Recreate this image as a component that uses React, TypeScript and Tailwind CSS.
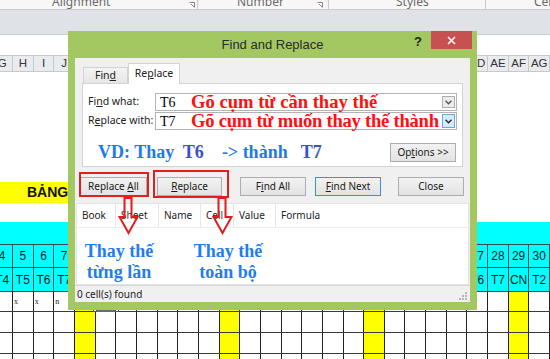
import React from "react";

const COLS = Array.from({ length: 27 }, (_, i) => i);
const LETTERS = ["G","H","I","J","K","L","M","N","O","P","Q","R","S","T","U","V","W","X","Y","Z","AA","AB","AC","AD","AE","AF","AG"];
const dayName = (n: number) => {
  const m = n % 7;
  if (m === 1) return "CN";
  if (m === 0) return "T7";
  return "T" + m;
};

const UI = "font-['Noto_Sans',Arial,sans-serif]";
const SERIF = "font-['Liberation_Serif','Times_New_Roman',serif]";

function HeaderRow() {
  return (
    <div className="h-[17px] bg-[#e9ebee] border-y border-[#c5c8cc] overflow-hidden">
      <div className="flex ml-[-7.67px] h-full">
        {COLS.map((i) => (
          <div key={i} className="w-[20.67px] shrink-0 h-full border-r border-[#c5c8cc] flex items-center justify-center text-[11.5px] text-[#333] font-['Liberation_Sans',Arial,sans-serif]">
            {LETTERS[i]}
          </div>
        ))}
      </div>
    </div>
  );
}

function CyanRow({ kind, h }: { kind: "num" | "day"; h: string }) {
  return (
    <div className={`${h} bg-[#00ffff] border-b border-[#2d4f4f] overflow-hidden`}>
      <div className="flex ml-[-7.67px] h-full">
        {COLS.map((i) => {
          const n = i + 4;
          return (
            <div key={i} className="w-[20.67px] shrink-0 h-full border-r border-[#2d4f4f] flex items-center justify-center text-[12px] text-[#1a1a1a] font-['Liberation_Sans',Arial,sans-serif]">
              {kind === "num" ? n : dayName(n)}
            </div>
          );
        })}
      </div>
    </div>
  );
}

function GridRow({ h, marks }: { h: string; marks?: boolean }) {
  return (
    <div className={`${h} border-b border-[#3a3a3a] overflow-hidden`}>
      <div className="flex ml-[-7.67px] h-full">
        {COLS.map((i) => {
          const n = i + 4;
          const cn = n % 7 === 1;
          let mark = "";
          if (marks && (i === 1 || i === 2)) mark = "x";
          if (marks && i === 3) mark = "n";
          return (
            <div key={i} className={`w-[20.67px] shrink-0 h-full border-r border-[#222] ${cn ? "bg-[#ffff00]" : "bg-white"}`}>
              {mark && (
                <span className={`${SERIF} block text-[8px] leading-[10px] pl-[1px] pt-[5px] text-[#222]`}>{mark}</span>
              )}
            </div>
          );
        })}
      </div>
    </div>
  );
}

function Chevron({ dark }: { dark?: boolean }) {
  return (
    <svg width="7" height="5" viewBox="0 0 7 5">
      <path d="M0.5 0.8 L3.5 3.8 L6.5 0.8" fill="none" stroke={dark ? "#222" : "#555"} strokeWidth="1.3" />
    </svg>
  );
}

function Btn({ children, focus, w }: { children: React.ReactNode; focus?: boolean; w: string }) {
  return (
    <div className={`${w} h-[19px] shrink-0 flex items-center justify-center text-[10px] text-[#1a1a1a] border ${focus ? "border-[#3c8ee0]" : "border-[#adadad]"} bg-gradient-to-b from-[#f2f2f2] to-[#e3e3e3]`}>
      <span className="whitespace-pre">{children}</span>
    </div>
  );
}

function DownArrow() {
  return (
    <svg width="21" height="38" viewBox="0 0 21 38">
      <path d="M6.5 1 H13.5 V20 H19.5 L10.5 36 L1.5 20 H6.5 Z" fill="#ffffff" fillOpacity="0.15" stroke="#e31b1b" strokeWidth="2" strokeLinejoin="miter" />
    </svg>
  );
}

export default function App() {
  return (
    <div className={`relative w-[550px] h-[359px] overflow-hidden bg-white ${UI}`}>
      {/* Ribbon group labels */}
      <div className="h-[10px] bg-[#f7f7f7] border-b border-[#c9c9c9] flex overflow-hidden text-[12px] leading-[12px] text-[#6a6a6a]">
        <div className="w-[197px] shrink-0 relative">
          <span className="absolute left-[52px] top-[-4px]">Alignment</span>
          <svg className="absolute left-[189px] top-[2px]" width="6" height="6" viewBox="0 0 6 6"><path d="M0.5 0.5 H5.5 V5.5 M2 2 L5 5" fill="none" stroke="#888" strokeWidth="1" /></svg>
        </div>
        <div className="w-px shrink-0 bg-[#c9c9c9]" />
        <div className="w-[130px] shrink-0 relative">
          <span className="absolute left-[39px] top-[-4px]">Number</span>
          <svg className="absolute left-[119px] top-[2px]" width="6" height="6" viewBox="0 0 6 6"><path d="M0.5 0.5 H5.5 V5.5 M2 2 L5 5" fill="none" stroke="#888" strokeWidth="1" /></svg>
        </div>
        <div className="w-px shrink-0 bg-[#c9c9c9]" />
        <div className="w-[156px] shrink-0 relative">
          <span className="absolute left-[67px] top-[-4px]">Styles</span>
        </div>
        <div className="w-px shrink-0 bg-[#c9c9c9]" />
        <div className="flex-1 relative">
          <span className="absolute left-[48px] top-[-4px]">Cells</span>
        </div>
      </div>
      {/* gray band */}
      <div className="h-[25px] bg-[#dfe2e6] border-b border-[#c8ccd0]" />
      <div className="h-[20px] bg-white" />
      <HeaderRow />
      <div className="h-[110px] bg-white" />
      <div className="h-[21px] flex">
        <div className="w-[420px] bg-[#ffff00] flex items-center pl-[27px] text-[14px] font-bold text-[#111] font-['Liberation_Sans',Arial,sans-serif]">
          BẢNG CHẤM CÔNG
        </div>
      </div>
      <div className="h-[19px] bg-white" />
      <div className="h-[23px] bg-[#00ffff] border-b border-[#2d4f4f]" />
      <CyanRow kind="num" h="h-[23px]" />
      <CyanRow kind="day" h="h-[24px]" />
      <GridRow h="h-[20px]" marks />
      <GridRow h="h-[21px]" />
      <GridRow h="h-[21px]" />
      <GridRow h="h-[21px]" />

      {/* selection handle peeking under dialog */}
      <div className="absolute left-[95px] top-[309px] w-[22px] h-[3px] bg-[#6b6b6b]">
        <div className="absolute left-[-2px] top-[-1px] w-[4px] h-[4px] bg-white border border-[#555]" />
        <div className="absolute right-[-2px] top-[-1px] w-[4px] h-[4px] bg-white border border-[#555]" />
      </div>

      {/* Dialog */}
      <div className="absolute left-[68px] top-[31px] w-[409px] h-[279px] bg-[#a3c862] px-[7px] pb-[8px]">
        <div className="h-[27px] relative flex items-center justify-center">
          <span className="text-[13px] text-[#2b2b2b] font-['Liberation_Sans',Arial,sans-serif] mt-[1px]">Find and Replace</span>
          <span className="absolute left-[339px] top-[1px] text-[13px] font-bold text-[#222] font-['Liberation_Sans',Arial,sans-serif]">?</span>
          <div className="absolute right-[-2px] top-0 w-[41px] h-[18px] bg-[#c75050] flex items-center justify-center">
            <svg width="9" height="9" viewBox="0 0 9 9"><path d="M1 1 L8 8 M8 1 L1 8" stroke="#fff" strokeWidth="1.6" /></svg>
          </div>
        </div>
        <div className="h-[244px] bg-[#f0f0f0] flex flex-col">
          {/* tabs */}
          <div className="h-[25px] shrink-0 flex items-end pl-[8px]">
            <div className="w-[45px] h-[16px] border border-b-0 border-[#d3d3d3] bg-gradient-to-b from-[#f4f4f4] to-[#e6e6e6] flex items-center justify-center text-[10.5px] text-[#222]">
              <span>Fin<u>d</u></span>
            </div>
            <div className="w-[52px] h-[21px] mb-[-1px] relative z-10 border border-b-0 border-[#d3d3d3] bg-white flex items-center justify-center text-[10.5px] text-[#222]">
              <span>Re<u>p</u>lace</span>
            </div>
          </div>
          {/* panel */}
          <div className="mx-[7px] h-[84px] shrink-0 bg-white border border-[#d3d3d3] flex flex-col pt-[9px] pl-[5px]">
            <div className="flex items-center h-[18px]">
              <span className="w-[67px] text-[10.5px] text-[#222]">Fi<u>n</u>d what:</span>
              <div className="w-[302px] h-[18px] border border-[#b3b3b3] bg-white flex items-center pl-[4px] pr-[1px]">
                <span className={`${SERIF} text-[14px] text-black w-[31px] shrink-0`}>T6</span>
                <span className={`${SERIF} flex-1 min-w-0 text-[18.6px] leading-[16px] font-bold text-[#ff1010] whitespace-nowrap`}>Gõ cụm từ cần thay thế</span>
                <div className="w-[13px] h-[12px] shrink-0 border border-[#adadad] bg-[#ececec] flex items-center justify-center"><Chevron /></div>
              </div>
            </div>
            <div className="flex items-center h-[18px] mt-[1px]">
              <span className="w-[67px] text-[10.5px] text-[#222]">R<u>e</u>place with:</span>
              <div className="w-[302px] h-[18px] border border-[#b3b3b3] bg-white flex items-center pl-[4px] pr-[1px]">
                <span className={`${SERIF} text-[14px] text-black w-[31px] shrink-0`}>T7</span>
                <span className={`${SERIF} flex-1 min-w-0 text-[18.6px] leading-[16px] font-bold text-[#ff1010] whitespace-nowrap tracking-[-0.25px]`}>Gõ cụm từ muốn thay thế thành</span>
                <div className="w-[13px] h-[14px] shrink-0 relative z-10 border border-[#6fa7e0] bg-[#d9eafb] flex items-center justify-center"><Chevron dark /></div>
              </div>
            </div>
            <div className="flex items-center mt-[9px]">
              <div className={`${SERIF} w-[302px] pl-[10px] text-[18px] font-bold whitespace-pre text-[#1f7ae6]`}>
                VD: Thay  <span className="text-[#3b52c6]">T6</span>    -&gt; thành   <span className="text-[#3b52c6]">T7</span>
              </div>
              <Btn w="w-[66px]">Op<u>t</u>ions &gt;&gt;</Btn>
            </div>
          </div>
          {/* buttons */}
          <div className="h-[19px] mt-[10px] shrink-0 flex pl-[5px]">
            <Btn w="w-[67px]">Replace <u>A</u>ll</Btn>
            <div className="w-[10px]" />
            <Btn w="w-[65px]"><u>R</u>eplace</Btn>
            <div className="w-[18px]" />
            <Btn w="w-[66px]">F<u>i</u>nd All</Btn>
            <div className="w-[9px]" />
            <Btn w="w-[66px]" focus><u>F</u>ind Next</Btn>
            <div className="w-[17px]" />
            <Btn w="w-[66px]">Close</Btn>
          </div>
          {/* results */}
          <div className="mt-[7px] mx-[1px] h-[82px] shrink-0 bg-white border border-[#e3e3e3]">
            <div className="h-[24px] flex border-b border-[#eeeeee] text-[10px] text-[#222]">
              <div className="w-[39px] border-r border-[#e5e5e5] flex items-center pl-[5px]">Book</div>
              <div className="w-[43px] border-r border-[#e5e5e5] flex items-center pl-[5px]">Sheet</div>
              <div className="w-[42px] border-r border-[#e5e5e5] flex items-center pl-[5px]">Name</div>
              <div className="w-[33px] border-r border-[#e5e5e5] flex items-center pl-[5px]">Cell</div>
              <div className="w-[42px] border-r border-[#e5e5e5] flex items-center pl-[5px]">Value</div>
              <div className="flex-1 flex items-center pl-[5px]">Formula</div>
            </div>
          </div>
          <div className="h-[17px] shrink-0 border-t border-[#d6d6d6] flex items-center justify-between pl-[2px] pr-[3px] text-[10px] text-[#222]">
            <span>0 cell(s) found</span>
            <svg width="8" height="8" viewBox="0 0 8 8" className="self-end mb-[2px]">
              <rect x="6" y="0" width="2" height="2" fill="#b5b5b5" />
              <rect x="3" y="3" width="2" height="2" fill="#b5b5b5" />
              <rect x="6" y="3" width="2" height="2" fill="#b5b5b5" />
              <rect x="0" y="6" width="2" height="2" fill="#b5b5b5" />
              <rect x="3" y="6" width="2" height="2" fill="#b5b5b5" />
              <rect x="6" y="6" width="2" height="2" fill="#b5b5b5" />
            </svg>
          </div>
        </div>

        {/* annotations */}
        <div className="absolute left-[11px] top-[141px] w-[70px] h-[25px] border-2 border-[#e21f1f]" />
        <div className="absolute left-[85px] top-[139px] w-[76px] h-[28px] border-2 border-[#e21f1f]" />
        <div className="absolute left-[50px] top-[166px]"><DownArrow /></div>
        <div className="absolute left-[144px] top-[166px]"><DownArrow /></div>
        <div className={`absolute left-[14px] top-[210px] w-[74px] text-center ${SERIF} text-[18px] leading-[21px] font-bold text-[#1f7df0]`}>
          Thay thế<br />từng lần
        </div>
        <div className={`absolute left-[123px] top-[210px] w-[74px] text-center ${SERIF} text-[18px] leading-[21px] font-bold text-[#1f7df0]`}>
          Thay thế<br />toàn bộ
        </div>
      </div>
    </div>
  );
}
